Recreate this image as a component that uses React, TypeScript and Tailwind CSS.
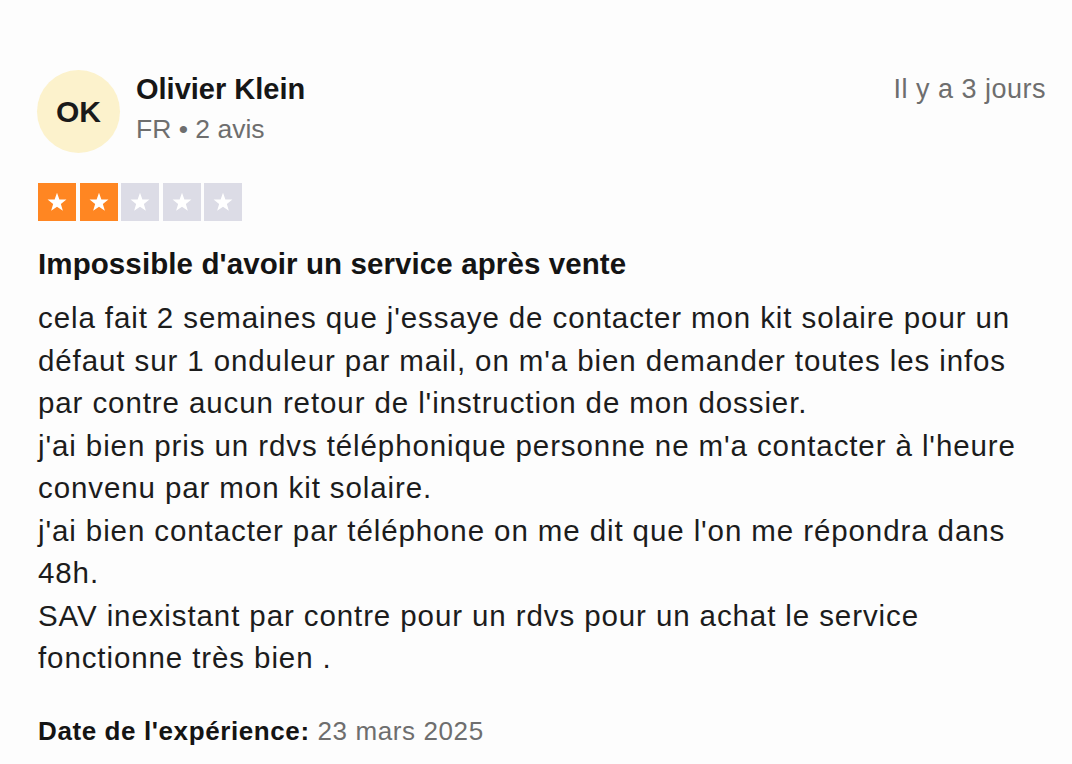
import React from 'react';

const body = [
  "cela fait 2 semaines que j'essaye de contacter mon kit solaire pour un défaut sur 1 onduleur par mail, on m'a bien demander toutes les infos par contre aucun retour de l'instruction de mon dossier.",
  "j'ai bien pris un rdvs téléphonique personne ne m'a contacter à l'heure convenu par mon kit solaire.",
  "j'ai bien contacter par téléphone on me dit que l'on me répondra dans 48h.",
  'SAV inexistant par contre pour un rdvs pour un achat le service fonctionne très bien .',
];

function Star({ filled }: { filled: boolean }) {
  return (
    <div className={`w-[38px] h-[38px] flex items-center justify-center ${filled ? 'bg-[#ff8622]' : 'bg-[#dcdce6]'}`}>
      <svg width="22" height="22" viewBox="0 0 24 24">
        <polygon
          fill="#ffffff"
          points="12,2 14.6,9.2 22.3,9.4 16.2,14.1 18.4,21.5 12,17.2 5.6,21.5 7.8,14.1 1.7,9.4 9.4,9.2"
        />
      </svg>
    </div>
  );
}

export default function App() {
  return (
    <div className="w-[1072px] h-[764px] bg-[#fdfdfd] overflow-hidden font-['Liberation_Sans',Arial,sans-serif] text-[#1c1c1c]">
      <div className="pl-[37px] pr-[26px] pt-[70px]">
        {/* header */}
        <div className="flex items-start">
          <div className="w-[83px] h-[83px] rounded-full bg-[#fcf2cc] flex items-center justify-center text-[30px] font-bold text-[#1a1a1a]">
            OK
          </div>
          <div className="ml-[16px] pt-[1px]">
            <div className="text-[29px] font-bold leading-[36px] text-[#161616]">Olivier Klein</div>
            <div className="text-[26.5px] leading-[32px] mt-[6px] text-[#6e6e6e]">FR • 2 avis</div>
          </div>
          <div className="ml-auto pt-[1px] text-[27px] tracking-[0.5px] leading-[36px] text-[#6e6e6e]">Il y a 3 jours</div>
        </div>

        {/* stars */}
        <div className="flex gap-[3.5px] mt-[30px] ml-[1px]">
          <Star filled />
          <Star filled />
          <Star filled={false} />
          <Star filled={false} />
          <Star filled={false} />
        </div>

        <h2 className="mt-[23px] ml-[1px] text-[29.5px] tracking-[0.1px] font-bold leading-[40px] text-[#141414]">
          Impossible d'avoir un service après vente
        </h2>

        <div className="mt-[13px] ml-[1px] text-[29.5px] tracking-[0.9px] leading-[42.5px]">
          {body.map((p, i) => (
            <p key={i}>{p}</p>
          ))}
        </div>

        <div className="mt-[35px] ml-[1px] text-[26px] tracking-[0.6px] leading-[32px]">
          <span className="font-bold text-[#141414]">Date de l'expérience:</span>{' '}
          <span className="text-[#6e6e6e]">23 mars 2025</span>
        </div>
      </div>
    </div>
  );
}
